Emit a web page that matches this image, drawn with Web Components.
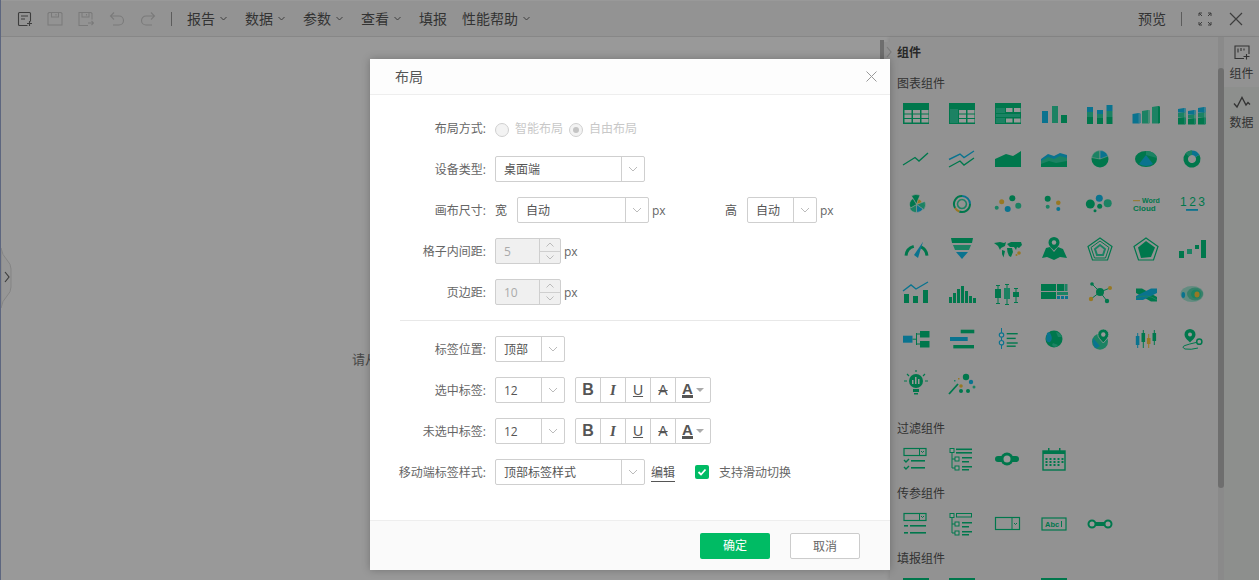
<!DOCTYPE html>
<html lang="zh"><head><meta charset="utf-8"><title>布局</title>
<style>
html,body{margin:0;height:100%;overflow:hidden;background:#fff}
body{font:12px/1.4 "Open Sans","Noto Sans CJK SC",sans-serif;color:#555}
</style></head><body>
<x-app>
  <x-toolbar slot="top"></x-toolbar>
  <x-canvas slot="main">请从</x-canvas>
  <x-panel slot="main">
    <x-section title="图表组件" extra icons="table cross multi bar stack bar3d stack3d line lines area areas pie pie3d donut rose rings scatter scatter2 bubble word num gauge funnel world pin radar radar2 steps combo hist box tree network sankey heat org gantt time globe globepin candle route bulb wand"></x-section>
    <x-section title="过滤组件" icons="flist ftree slider cal"></x-section>
    <x-section title="传参组件" icons="plist ptree combo2 abc range"></x-section>
    <x-section title="填报组件" icons="table cross combo2 multi"></x-section>
  </x-panel>
  <x-dialog slot="over" heading="布局">
    <x-row label="布局方式:">
      <x-radio>智能布局</x-radio><x-radio checked>自由布局</x-radio>
    </x-row>
    <x-row label="设备类型:"><x-select value="桌面端" w="150"></x-select></x-row>
    <x-row label="画布尺寸:">
      <x-text>宽</x-text><x-select value="自动" w="132" style="margin-left:10px"></x-select><x-unit>px</x-unit>
      <x-text style="margin-left:60px">高</x-text><x-select value="自动" w="70" style="margin-left:10px"></x-select><x-unit>px</x-unit>
    </x-row>
    <x-row label="格子内间距:"><x-spinner value="5"></x-spinner><x-unit>px</x-unit></x-row>
    <x-row label="页边距:"><x-spinner value="10"></x-spinner><x-unit>px</x-unit></x-row>
    <x-divider></x-divider>
    <x-row label="标签位置:"><x-select value="顶部" w="70"></x-select></x-row>
    <x-row label="选中标签:"><x-select value="12" w="70"></x-select><x-fontbar></x-fontbar></x-row>
    <x-row label="未选中标签:"><x-select value="12" w="70"></x-select><x-fontbar></x-fontbar></x-row>
    <x-row label="移动端标签样式:">
      <x-select value="顶部标签样式" w="150"></x-select><x-link>编辑</x-link><x-check>支持滑动切换</x-check>
    </x-row>
  </x-dialog>
</x-app>
<script>
const def=(name,css,html)=>customElements.define(name,class extends HTMLElement{
  constructor(){super();this.attachShadow({mode:'open'});}
  connectedCallback(){if(this._d)return;this._d=1;this.shadowRoot.innerHTML='<style>'+css+'</style>'+(typeof html==='function'?html(this):html);}
});
const chev=(c='#aaa')=>`<svg width="10" height="6" viewBox="0 0 10 6"><path d="M1 1l4 4 4-4" fill="none" stroke="${c}"/></svg>`;
const tchev=`<svg width="7" height="5" viewBox="0 0 7 5"><path d="M.5 1l3 3 3-3" fill="none" stroke="#666"/></svg>`;

def('x-app',`:host{display:grid;grid-template-rows:37px 1fr;position:relative;width:100vw;height:100vh;overflow:hidden;box-sizing:border-box;border-left:1px solid #5d667f}
.main{display:flex;min-height:0}
.ov{position:absolute;inset:0;background:rgba(0,0,0,.4)}
svg.h{position:absolute;left:0;top:248px}
svg.p{position:absolute;left:879px;top:40px}`,
`<slot name="top"></slot><div class="main"><slot name="main"></slot></div>
<svg class="h" width="12" height="60" viewBox="0 0 12 60"><path d="M0 0q1 7 6 12 4 4 4 9v18q0 5-4 9-5 5-6 12z" fill="#fafafa" stroke="#ddd"/><path d="M4 24l4 5-4 5" fill="none" stroke="#666" stroke-width="1.2"/></svg>
<svg class="p" width="15" height="22" viewBox="0 0 15 22"><rect width="4" height="19" fill="#b8b8b8"/><rect x="4" y="2" width="10" height="20" fill="#f4f4f4"/><path d="M7 7l4 5-4 5" fill="none" stroke="#ccc" stroke-width="1.2"/></svg>
<div class="ov"></div><slot name="over"></slot>`);

const tbi={
 doc:`<path d="M11.5 14.5H3.5a1 1 0 0 1-1-1v-11a1 1 0 0 1 1-1h10a1 1 0 0 1 1 1v8M5 5h7M5 8h4M11 12.5h5M13.5 10v5" />`,
 save:`<path d="M2 1.5h12l1 1v11.5H1V2.500zM4.500 1.500v4.500h7V1.500M9 3v1.500" />`,
 saveas:`<path d="M10 14.500H1V1.500h12l1 1v6M4 1.500v4.500h7V1.500M8.500 3v1.500M10 12h5.500M13.500 10l2 2-2 2" />`,
 undo:`<path d="M5 1.500L1.500 5 5 8.500M1.500 5H10a4.500 4.500 0 0 1 0 9H4" />`,
 redo:`<path d="M11 1.500L14.500 5 11 8.500M14.500 5H6a4.500 4.500 0 0 0 0 9h6" />`};
const tb=(k,c)=>`<svg width="16" height="16" viewBox="0 0 16 16" fill="none" stroke="${c}" stroke-width="1.100">${tbi[k]}</svg>`;
def('x-toolbar',`:host{display:flex;align-items:center;box-sizing:border-box;height:37px;background:#f5f5f5;border-bottom:1px solid #e2e2e2;border-top:1px solid #fff;color:#555;font-size:14px;padding:0 16px 0 15px;line-height:20px}
.ic{display:flex;gap:15px;align-items:center}svg{display:block}
.sep{width:1px;height:14px;background:#999}
.m{display:flex;gap:18px;margin-left:15px}.m span{display:flex;align-items:center;gap:5px}
.r{margin-left:auto;display:flex;align-items:center}`,
`<div class="ic">${tb('doc','#666')}${tb('save','#ccc')}${tb('saveas','#ccc')}${tb('undo','#ccc')}${tb('redo','#ccc')}</div>
<div class="sep" style="margin-left:15px"></div>
<div class="m"><span>报告${tchev}</span><span>数据${tchev}</span><span>参数${tchev}</span><span>查看${tchev}</span><span style="margin-right:-3px">填报</span><span>性能帮助${tchev}</span></div>
<div class="r"><span>预览</span><div class="sep" style="margin:0 16px 0 15px"></div>
<svg width="14" height="14" viewBox="0 0 14 14" fill="none" stroke="#666"><path d="M1 4V1h3M1 1l3 3M10 1h3v3M13 1l-3 3M1 10v3h3M1 13l3-3M10 13h3v-3M13 13l-3-3"/></svg>
<svg style="margin-left:17px" width="14" height="14" viewBox="0 0 14 14" fill="none" stroke="#666" stroke-width="1.200"><path d="M1 1l12 12M13 1L1 13"/></svg></div>`);

def('x-canvas',`:host{flex:1;display:block;padding:312px 0 0 351px;background:#fff;color:#777;font-size:13px;line-height:20px;white-space:nowrap;min-width:0}`,`<slot></slot>`);

def('x-panel',`:host{display:grid;grid-template-columns:1fr 35px;width:369px;flex:none;background:#f4f4f4;box-shadow:-2px 0 3px rgba(0,0,0,.08);min-height:0;position:relative;overflow:hidden}
.c{position:relative;padding:6px 0 0 7px;overflow:hidden;min-height:0}
h2{margin:0 0 10px;font-size:12px;line-height:20px;color:#444;font-weight:700}
.sb{position:absolute;right:0;top:0;bottom:0;width:6px;background:#e6e6e6}
.th{position:absolute;left:0;width:6px;top:31px;height:420px;background:#b8b8b8;border-radius:3px}
.t{background:#ebeeeb}.tb{display:flex;flex-direction:column;align-items:center;height:50px;padding-top:8px;box-sizing:border-box;color:#555;line-height:18px}
.tb.on{background:#f4f4f4}.tb svg{display:block;margin-bottom:5px}`,
`<div class="c"><h2>组件</h2><slot></slot><div class="sb"><div class="th"></div></div></div>
<div class="t"><div class="tb on"><svg width="16" height="15" viewBox="0 0 16 15" fill="none" stroke="#555" stroke-width="1.100"><path d="M10 13.500H1V1h14v8M4 3.500v4M7 3v3M10 3.500v2M9.500 11.500h6M12.500 9v5.500"/></svg>组件</div>
<div class="tb" style="padding-top:9px"><svg width="18" height="13" viewBox="0 0 18 13" fill="none" stroke="#555" stroke-width="1.300"><path d="M1 7.500L4 11 9 1.500 13 9l2-2.500 2 2"/></svg><span>数据</span></div></div>`);

def('x-section',`:host{display:block;margin-bottom:9px}:host([extra]){margin-bottom:19px}
.t{line-height:20px;color:#555;font-size:12px;margin-bottom:6px;position:relative;top:1px}
.g{display:grid;grid-template-columns:repeat(7,30px);gap:15px 16px;padding-left:4px}`,
h=>`<div class="t">${h.getAttribute('title')}</div><div class="g">${h.getAttribute('icons').split(' ').map(n=>`<x-icon name="${n}"></x-icon>`).join('')}</div>`);

const G='#00c77f',L='#2fd9a5',B='#12c0ee',O='#fcc83c',W='#fff';
const R=(x,y,w,h,c=G,r=0)=>`<rect x="${x}" y="${y}" width="${w}" height="${h}" fill="${c}" rx="${r}"/>`;
const C=(x,y,r,c=G)=>`<circle cx="${x}" cy="${y}" r="${r}" fill="${c}"/>`;
const P=(d,c=G)=>`<path d="${d}" fill="${c}"/>`;
const S=(d,c=G,w=1.4)=>`<path d="${d}" fill="none" stroke="${c}" stroke-width="${w}"/>`;
const pt=(x,y,r,a)=>{a=(a-90)*Math.PI/180;return (x+r*Math.cos(a)).toFixed(2)+' '+(y+r*Math.sin(a)).toFixed(2)};
const Wd=(x,y,r,a,b,c=G)=>`<path d="M${x} ${y}L${pt(x,y,r,a)}A${r} ${r} 0 ${b-a>180?1:0} 1 ${pt(x,y,r,b)}Z" fill="${c}" stroke="#fff" stroke-width=".5"/>`;
const A=(x,y,r,a,b,c=G,w=2)=>S(`M${pt(x,y,r,a)}A${r} ${r} 0 ${b-a>180?1:0} 1 ${pt(x,y,r,b)}`,c,w);
const cells=(xs,ys,w,h)=>ys.map(y=>xs.map(x=>R(x,y,w,h,W)).join('')).join('');
const T=(x,y,s,t,c=G,w=700,ex='')=>`<text x="${x}" y="${y}" font-size="${s}" font-weight="${w}" fill="${c}" font-family="Liberation Sans,sans-serif" ${ex}>${t}</text>`;
const bar3=(x,y,w,h,c,side)=>P(`M${x} ${y+1}l${w-2} -1 2 .8V${y+h}l-2 .5H${x}z`,c)+P(`M${x+w-2} ${y}l2 .8V${y+h}l-2 .5z`,side);
const box=(x,y,s=4)=>`<rect x="${x}" y="${y}" width="${s}" height="${s}" fill="#fff" stroke="${G}"/>`;
const I={
table:R(2,4,26,21)+cells([3.5,12,20.5],[11,15.5,20],7,3.5),
cross:R(2,4,26,21)+R(3,10,8,14,L)+cells([12,20.5],[11,15.5,20],7,3.5),
multi:R(2,4,26,21)+R(3,9,9,5,L)+R(3,19,9,5,L)+R(13,9,6.5,4,W)+R(21,9,6.5,4,W)+R(3,15,24,3,L)+R(13,19.500,6.5,4,W)+R(21,19.500,6.5,4,W),
bar:R(3,12,6,12,B)+R(13,7,6,17,L)+R(22,16,6,8),
stack:R(2,8,6,5,B)+R(2,13,6,5,L)+R(2,18,6,7)+R(12,11,6,4,B)+R(12,15,6,4,L)+R(12,19,6,6)+R(21.500,6,6,6,B)+R(21.500,12,6,6,L)+R(21.500,18,6,7),
bar3d:bar3(1.500,14,8,10,B,'#5cd6f5')+bar3(11,11,8,13,L,'#7ce8c6')+bar3(21,7,8,17,L,'#00c77f'),
stack3d:[[1,9,4,5,7],[11,11,4,4,6],[21,8,5,5,7]].map(([x,y,a,b,c])=>bar3(x,y+a+b,8,c,G,'#2fd9a5')+bar3(x,y+a,8,b,L,'#7ce8c6')+bar3(x,y,8,a,B,'#5cd6f5')).join(''),
line:S('M2 21L14 13.500 18 17 27 9'),
lines:S('M2 15.500L13 10 17 13.500 27 7',B)+S('M2 23L13 17 17 21 27 14'),
area:P('M2 15L13 10 20 12 28 7V23H2z'),
areas:P('M2 15L9 10 15 12 21 9 28 11V22H2z',B)+P('M2 17L9 13 15 15 21 12 28 14V22H2z',L)+P('M2 20L10 17 17 19 28 17V23H2z'),
pie:C(15,15,8.500)+Wd(15,15,8.500,-80,0,L)+Wd(15,15,8.500,0,70,B),
pie3d:`<ellipse cx="15" cy="15" rx="11" ry="8" fill="${G}"/>`+P('M15 11L8 20Q15 24 22 20z',B)+P('M15 7Q24 7 26 14L15 11z',L),
donut:A(15,15,6.300,60,360,G,4.500)+A(15,15,6.300,0,60,B,4.500)+A(15,15,6.300,310,360,L,4.500),
rose:Wd(15.500,15.500,10,-30,20,G)+Wd(15.500,15.500,6,20,70,O)+Wd(15.500,15.500,9,70,125,L)+Wd(15.500,15.500,8,125,180,B)+Wd(15.500,15.500,8,180,240,L)+Wd(15.500,15.500,7,240,330,G),
rings:A(15,15,8,90,200,G,2)+A(15,15,8,200,240,O,2)+A(15,15,8,240,360,G,2)+A(15,15,8,0,90,B,2)+A(15,15,4.500,0,359,L,1.600),
scatter:C(3.700,18.700,2,L)+C(8.700,12.700,2.500,O)+C(19.300,9.300,3)+C(14.700,20,3,B)+C(25.300,16.700,3,L),
scatter2:C(8.700,9.700,3)+C(19.300,13.700,2.300,O)+C(8.700,17.700,2,L)+C(19.300,20,2,B),
bubble:C(5.300,15,4.500)+C(14.300,9.300,3.500,B)+C(14.700,17.300,2.500)+C(22.700,14.300,4,L)+C(10,21.700,1.500),
word:R(2,11.200,7,1,O)+T(11,14.300,7,'Word',G)+T(2,22,8,'Cloud',G),
num:T(3,17,12,'123',G,400,'letter-spacing="2.500"')+R(9,20,12,1.800,B),
gauge:A(15.500,22.500,10.500,-85,-15,G,3)+A(15.500,22.500,10.500,25,85,G,3)+P('M13 21L22 7.700 17 24z',B),
funnel:P('M4 4H26L25 9H5z')+P('M6 11H24L22 16H8z',L)+P('M9 18H21L15 25z',B),
world:P('M1 9L7 8 11 9 13 8 12 12 8 14 7 16 5 12zM9 16L12 17 10.500 23.500 9 20zM14 10L18 8 22 8 28 8 29 11 26 14 24 13 23 16 21 13 17 13zM14 14L19 14 20 18 18 23 16 22 14.500 18z')+C(26,19,1.800,O)+C(23.500,21,1,O),
pin:P('M15 3a5.500 5.500 0 0 1 5.500 5.500c0 3-3 5.500-5.500 8-2.500-2.500-5.500-5-5.500-8A5.500 5.500 0 0 1 15 3z')+C(15,8.500,2.200,W)+P('M7 14L11 13 15 18 19 13 24 15 28 24 21 23 15 26 8 23 3 24z'),
radar:S('M15 4L27 12.500 22.500 26H7.500L3 12.500z',G,1.200)+S('M15 7L24 13.500 20.500 24H9.500L6 13.500z',G,1)+S('M15 11L20 15 18 21H12L10 15z',L,2),
radar2:S('M15 4L27 12.500 22.500 26H7.500L3 12.500z',G,1.200)+P('M15 7L24 13.500 20 23 10 24 7 13.500z'),
steps:R(2,17,5,7)+R(10,15,5,5,L)+R(18,11,4,4)+R(24,6,5,18),
combo:R(3,15,5,9)+R(12,17,5,7)+R(22,11,5,13)+S('M2 12L10 6 15 10 27 3',B),
hist:[[2,18],[6,14],[10,10],[14,7],[18,12],[22,17],[26,19]].map(([x,y])=>R(x,y,3,24-y)).join(''),
box:[[5,6,24],[14,5,25],[23,9,23]].map(([x,a,b])=>R(x-.5,a,1,b-a)+R(x-2,a,4,1)+R(x-2,b,4,1)+R(x-3,a+4,6,b-a-9,x==14?L:G)).join(''),
tree:R(2,5,15,7)+R(18,5,7,7)+R(25.500,5,3,7,L)+R(2,13,15,7)+R(18,13,11,3,L)+R(18,17,3,3,B)+R(22,17,3,3,B)+R(26,17,3,3,B),
network:S('M15 13L7 5M15 13L25 9M15 13L6 20M15 13L22 22',G,1)+C(15,13,4)+C(7,5,1.800)+C(25,9,2,O)+C(6,20,2.200,O)+C(22,22,2.200),
sankey:P('M5 9.500H11L26 18V22.500H20L5 14z')+P('M5 17L20 9.500H26V14L12 21H5z',B)+S('M5 19Q16 14 26 21',L,1),
heat:`<ellipse cx="15" cy="15" rx="11.500" ry="8" fill="#a5e8d6"/><ellipse cx="18" cy="15" rx="8" ry="6.500" fill="#5ad6b0"/><ellipse cx="19" cy="15" rx="5" ry="4.500" fill="${L}"/><ellipse cx="20" cy="15.500" rx="2.500" ry="3" fill="${O}"/><ellipse cx="6.300" cy="16" rx="1.800" ry="3" fill="${B}"/>`,
org:R(2,11.700,9.500,7,B)+R(11.500,14.700,4,1)+R(15,9,1,12)+R(16,9.500,3,1)+R(16,19.500,3,1)+R(19,7,9.500,6.500)+R(19,17,9.500,6.500),
gantt:R(13.700,5.700,13.600,3.600)+R(3,13,17.700,4,B)+R(6.300,21,20.700,3.400),
time:R(8,4,1,21,B)+`<circle cx="8.500" cy="11" r="2.200" fill="#fff" stroke="${B}" stroke-width="1.200"/><circle cx="8.500" cy="18.700" r="2.200" fill="#fff" stroke="${B}" stroke-width="1.200"/>`+[9,13.700,18.300,21.500].map((y,i)=>R(13.700,y,i%2?9:11,1.400)).join(''),
globe:C(15,15,8.500)+P('M8 9Q11 7 12 11 14 15 11 18 8 19 7 15z',B)+P('M14 19L19 21 17 23Q14 23 13 21z',L)+P('M17 8Q22 9 23 13L19 13z',L),
globepin:C(15,17.700,8,L)+P('M8 14L15 22 11 24.500Q7 21 8 14z',B)+`<path d="M18.300 5a5.500 5.500 0 0 1 5.500 5.500c0 3-3 5.500-5.500 8.500-2.500-3-5.500-5.500-5.500-8.500A5.500 5.500 0 0 1 18.300 5z" fill="${G}" stroke="#fff" stroke-width=".8"/>`+C(18.300,10.500,2.200,W),
candle:R(6.200,9,1,15,B)+R(4.800,12,3.600,9,B)+R(11.800,6,1,18)+R(10.500,9,3.600,9)+R(17.200,10,1,14,O)+R(15.900,14,3.600,6,O)+R(22.800,6,1,15)+R(21.500,9,3.600,8),
route:P('M13 5a5.500 5.500 0 0 1 5.500 5.500c0 3-3 5.500-5.500 8-2.500-2.500-5.500-5-5.500-8A5.500 5.500 0 0 1 13 5z')+C(13,10.500,2,W)+`<circle cx="22.300" cy="17.700" r="2.600" fill="none" stroke="${G}" stroke-width="1.500"/>`+S('M19 18.500Q12 20 8 21.500T8 25Q14 26 21 24',G,1),
bulb:C(15,12,7)+R(12,20,6,3)+R(13,24,4,1.500)+R(11,11,1.500,4,W)+R(14,8,1.500,7,W)+R(17,10,1.500,5,W)+S('M15 1V3M6 5L8 7M24 5L22 7M3 12H6M24 12H27',G,1.200),
wand:S('M2 25L11 15',G,1.800)+R(11,9,1.500,1.500,O)+R(7,11,1.500,1.500,L)+C(19,8,3.200)+C(14,17,1.800,O)+C(24,13,2.200,B)+C(14,22,2)+C(21,22,2)+C(27,18,1.500,L),
flist:`<rect x="3" y="4.500" width="22" height="7" fill="none" stroke="${G}" stroke-width="1.200"/>`+R(18,4.500,1,7)+S('M20 7l1.500 1.500L23 7',G,1)+S('M3 16l2 2 3-3')+R(10,16,14,1.600)+S('M3 23l2 2 3-3')+R(10,23,14,1.600),
ftree:S('M5 7V24H9M5 15H9',G,1)+box(3,4.500)+box(8,13)+box(8,22)+R(9,4.500,16,1.600)+R(9,8,16,1.600)+R(15,13,10,1.500)+R(15,17,7,1.500)+R(15,22,10,1.500)+R(15,25,7,1.500),
slider:R(2,12,24,6,G,3)+C(14,15,6.500)+C(14,15,3.500,W),
cal:`<rect x="4" y="7" width="22" height="19" fill="none" stroke="${G}" stroke-width="1.400"/>`+R(4,7,22,3)+R(9,4,1.500,5)+R(20,4,1.500,5)+[12,15,18].map(y=>[7,11,15,19,23].slice(0,y==18?4:5).map(x=>R(x-.5,y+2,2,2)).join('')).join(''),
plist:`<rect x="3" y="4.500" width="22" height="7" fill="none" stroke="${G}" stroke-width="1.200"/>`+R(18,4.500,1,7)+S('M20 7l1.500 1.500L23 7',G,1)+R(3,16,4,1.600)+R(9,16,16,1.600)+R(3,23,4,1.600)+R(9,23,16,1.600),
ptree:S('M5 7V24H9M5 15H9',G,1)+box(3,4.500)+box(8,13)+box(8,22)+`<rect x="9.500" y="4.500" width="15" height="3.500" fill="none" stroke="${G}"/>`+R(15,13,10,1.500)+R(15,17,7,1.500)+R(15,22,10,1.500)+R(15,25,7,1.500),
combo2:`<rect x="2.500" y="8.500" width="24" height="12" fill="none" stroke="${G}" stroke-width="1.200"/>`+R(18.500,8.500,1,12)+S('M21 14l1.500 1.500L24 14',G,1),
abc:`<rect x="3" y="9" width="24" height="12" fill="none" stroke="${G}" stroke-width="1.200"/>`+T(6,18,7.500,'Abc',G)+R(22,12,1,6),
range:R(5,13,20,4)+`<circle cx="7" cy="15" r="3.500" fill="#fff" stroke="${G}" stroke-width="2"/><circle cx="23" cy="15" r="3.500" fill="#fff" stroke="${G}" stroke-width="2"/>`
};
def('x-icon',`:host{display:block;width:30px;height:30px}svg{display:block;overflow:visible}`,
h=>`<svg width="30" height="30" viewBox="0 0 30 30">${I[h.getAttribute('name')]||''}</svg>`);

def('x-dialog',`:host{position:absolute;left:369px;top:59px;width:520px;height:511px;background:#fff;display:flex;flex-direction:column;box-shadow:0 0 8px rgba(0,0,0,.25);color:#666}
header{height:36px;flex:none;box-sizing:border-box;display:flex;align-items:center;justify-content:space-between;padding:0 13px 0 25px;background:#fdfdfd;border-bottom:1px solid #eee;color:#555}
header span{font-size:14px}
main{flex:1;display:flex;flex-direction:column;gap:15px;padding:20px 0 0;min-height:0}
footer{height:50px;flex:none;box-sizing:border-box;display:flex;align-items:center;justify-content:flex-end;gap:20px;padding:0 30px;background:#fafafa;border-top:1px solid #eee}
button{all:unset;width:70px;height:26px;box-sizing:border-box;text-align:center;font:12px/25px "Open Sans","Noto Sans CJK SC",sans-serif;border-radius:2px}
.ok{background:#00bb64;color:#fff}.no{background:#fff;border:1px solid #ccc;color:#666}`,
h=>`<header><span>${h.getAttribute('heading')}</span><svg width="11" height="11" viewBox="0 0 11 11" fill="none" stroke="#999"><path d="M.5.5l10 10M10.500.5l-10 10"/></svg></header><main><slot></slot></main><footer><button class="ok">确定</button><button class="no">取消</button></footer>`);

def('x-row',`:host{display:flex;align-items:center;height:26px;font-size:12px;color:#666;line-height:26px}
label{width:116px;text-align:right;margin-right:9px;flex:none;white-space:nowrap;position:relative;top:1px}
.c{display:flex;align-items:center}`,
h=>`<label>${h.getAttribute('label')}</label><div class="c"><slot></slot></div>`);
def('x-divider',`:host{display:block;height:1px;background:#e8e8e8;margin:0 30px}`,``);
def('x-text',`:host{display:inline-block;color:#555;white-space:nowrap;position:relative;top:1px}`,`<slot></slot>`);
def('x-unit',`:host{display:inline-block;width:13px;margin-left:3px;color:#666;white-space:nowrap;position:relative;top:1px}`,`<slot></slot>`);
def('x-link',`:host{display:inline-block;margin-left:6px;color:#555;line-height:17px;border-bottom:1px solid #555;white-space:nowrap;position:relative;top:1px}`,`<slot></slot>`);
def('x-radio',`:host{display:inline-flex;align-items:center;gap:6px;margin-right:6px;color:#c8c8c8;white-space:nowrap;position:relative;top:1px}
i{display:block;width:14px;height:14px;box-sizing:border-box;border:1px solid #d0d0d0;border-radius:50%;background:#f3f3f3;position:relative;top:1px}
:host([checked]) i::after{content:"";position:absolute;inset:3px;background:#c4c4c4;border-radius:50%}`,`<i></i><slot></slot>`);
def('x-select',`:host{display:inline-flex;height:26px;box-sizing:border-box;border:1px solid #cfcfcf;border-radius:2px;background:#fff;color:#555;flex:none}
.v{flex:1;padding-left:8px;line-height:26px;white-space:nowrap}
.a{width:22px;border-left:1px solid #cfcfcf;display:flex;align-items:center;justify-content:center}`,
h=>{h.style.width=h.getAttribute('w')+'px';return `<div class="v">${h.getAttribute('value')}</div><div class="a">${chev('#bbb')}</div>`});
def('x-spinner',`:host{display:inline-flex;width:66px;height:26px;box-sizing:border-box;border:1px solid #cfcfcf;border-radius:2px;background:#f0f0f0;color:#aaa;flex:none}
.v{flex:1;padding-left:8px;line-height:26px}
.a{width:20px;border-left:1px solid #cfcfcf;display:flex;flex-direction:column}
.a div{flex:1;display:flex;align-items:center;justify-content:center}.a div+div{border-top:1px solid #cfcfcf}
svg{display:block}`,
h=>`<div class="v">${h.getAttribute('value')}</div><div class="a"><div><svg width="8" height="5" viewBox="0 0 8 5"><path d="M.5 4.500l3.500-3.500 3.500 3.500" fill="none" stroke="#bbb"/></svg></div><div><svg width="8" height="5" viewBox="0 0 8 5"><path d="M.5.5l3.500 3.500 3.500-3.500" fill="none" stroke="#bbb"/></svg></div></div>`);
def('x-fontbar',`:host{display:inline-flex;height:26px;width:136px;box-sizing:border-box;margin-left:10px;border:1px solid #cfcfcf;border-radius:2px;background:#fff;color:#555;font:14px/24px "Liberation Sans",sans-serif;flex:none}
b,i,u,s,.c{display:flex;justify-content:center;align-items:center;width:24px;border-right:1px solid #cfcfcf;text-decoration:none}
b{font-size:16px;font-weight:700}i{font-size:15px;font-family:"Liberation Serif",serif;font-weight:700}
u span{text-decoration:underline}s span{text-decoration:line-through}
.c{border:0;width:34px;gap:3px;font-weight:700;font-size:15px}
.c span{display:block;line-height:13px;border-bottom:3px solid #555;height:13px}
em{display:block;width:0;height:0;border:4px solid transparent;border-top-color:#aaa;border-bottom:0}`,
`<b>B</b><i>I</i><u><span>U</span></u><s><span>A</span></s><div class="c"><span>A</span><em></em></div>`);
def('x-check',`:host{display:inline-flex;align-items:center;gap:10px;margin-left:20px;color:#666;white-space:nowrap;position:relative;top:1px}
svg{display:block;position:relative;top:-1px}`,`<svg width="14" height="14" viewBox="0 0 14 14"><rect width="14" height="14" rx="2" fill="#00bb64"/><path d="M3.500 7l2.500 2.500 4.500-5" fill="none" stroke="#fff" stroke-width="1.800"/></svg><slot></slot>`);
</script>
</body></html>
